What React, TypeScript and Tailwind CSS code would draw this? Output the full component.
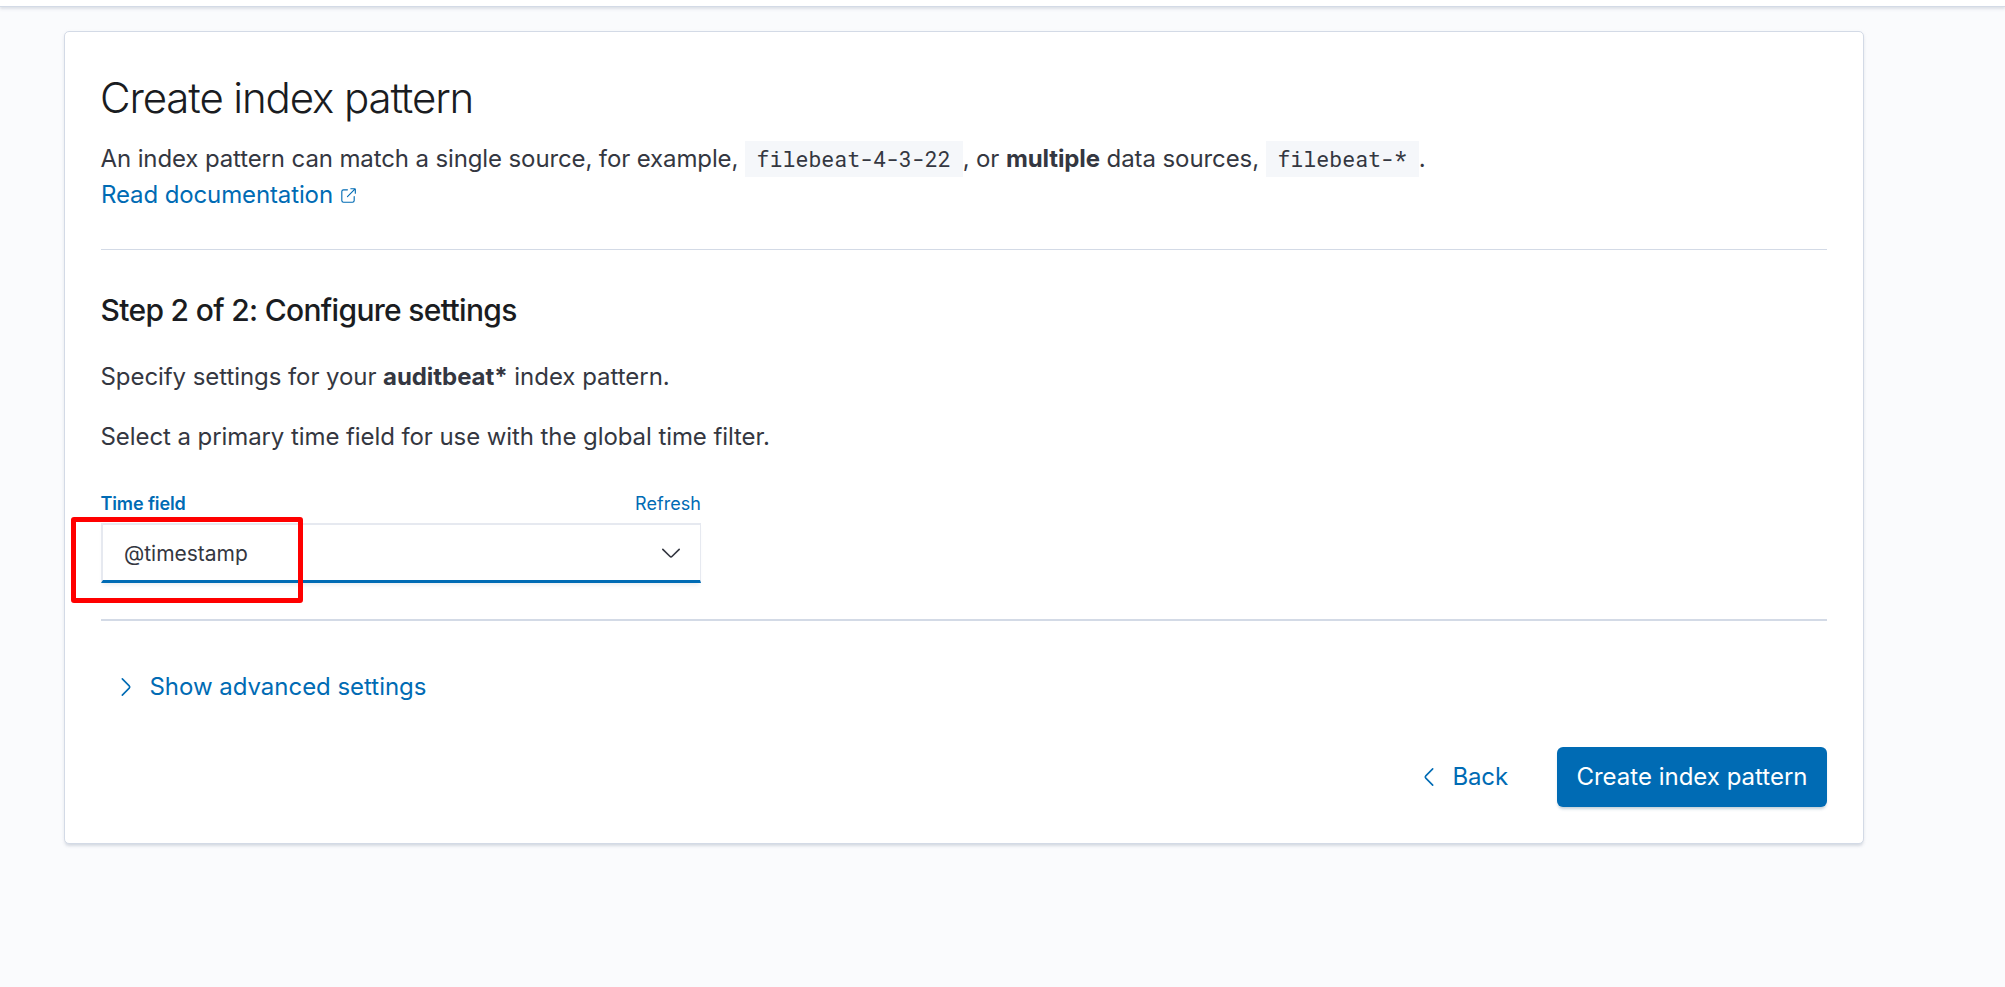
import type { ReactNode } from "react";

function Icon({ d, className }: { d: string; className: string }) {
  return (
    <svg viewBox="0 0 16 16" className={className} fill="currentColor" aria-hidden="true">
      <path d={d} />
    </svg>
  );
}

const ARROW_RIGHT =
  "M5.157 13.069l4.611-4.685a.546.546 0 000-.768L5.158 2.93a.552.552 0 010-.771.53.53 0 01.759 0l4.61 4.684a1.65 1.65 0 010 2.312l-4.61 4.684a.53.53 0 01-.76 0 .552.552 0 010-.771z";
const ARROW_LEFT =
  "M10.843 13.069L6.232 8.384a.546.546 0 010-.768l4.61-4.685a.552.552 0 000-.771.53.53 0 00-.759 0l-4.61 4.684a1.65 1.65 0 000 2.312l4.61 4.684a.53.53 0 00.76 0 .552.552 0 000-.771z";
const ARROW_DOWN =
  "M13.069 5.157L8.384 9.768a.546.546 0 01-.768 0L2.93 5.158a.552.552 0 00-.771 0 .53.53 0 000 .759l4.684 4.61a1.65 1.65 0 002.312 0l4.684-4.61a.53.53 0 000-.76.552.552 0 00-.771 0z";
const POPOUT =
  "M13 8.5a.5.5 0 111 0V12a2 2 0 01-2 2H4a2 2 0 01-2-2V4a2 2 0 012-2h3.5a.5.5 0 010 1H4a1 1 0 00-1 1v8a1 1 0 001 1h8a1 1 0 001-1V8.5zm-5.12.339a.5.5 0 11-.706-.707L13.305 2H10.5a.5.5 0 110-1H14a1 1 0 011 1v3.5a.5.5 0 11-1 0V2.72L7.88 8.838z";

function Code({ children }: { children: ReactNode }) {
  return (
    <code className="inline-block h-9 bg-[#f5f7fa] px-[11.7px] align-top font-['Roboto_Mono','Liberation_Mono',monospace] text-[21.6px] leading-9 tracking-normal">
      {children}
    </code>
  );
}

export default function App() {
  return (
    <div className="flex h-[987px] w-full flex-col bg-[#fafbfd] font-['Inter',sans-serif] text-[24px] leading-9 tracking-[-0.12px] text-[#343741]">
      <header className="h-[7px] shrink-0 border-b border-[#d3dae6] bg-white shadow-[0_2px_3px_rgba(152,162,179,0.3)]" />
      <main className="ml-16 mt-6 flex h-[813px] w-[1800px] flex-col rounded-[5px] border border-[#d3dae6] bg-white px-9 pt-9 shadow-[0_3px_3px_-1px_rgba(152,162,179,0.3),0_1px_5px_-2px_rgba(152,162,179,0.3)]">
        <h1 className="-ml-px text-[42px] font-light leading-[60px] tracking-[-1.12px] text-[#1a1c21]">
          Create index pattern
        </h1>
        <p className="-ml-[0.5px] mt-[13px] h-9 whitespace-nowrap">
          An index pattern can match a single source, for example, <Code>filebeat-4-3-22</Code>, or{" "}
          <strong className="font-bold">multiple</strong>
          <span className="tracking-[-0.08px]"> data sources, </span>
          <Code>filebeat-*</Code>.
        </p>
        <a className="flex h-9 items-center gap-1.5 text-[#006bb4]">
          Read documentation
          <Icon d={POPOUT} className="mt-0.5 size-[18px]" />
        </a>
        <hr className="mt-9 border-[#d3dae6]" />

        <h2 className="-ml-[0.5px] mt-[42px] text-[30px] font-medium leading-9 tracking-[-0.68px] text-[#1a1c21]">
          Step 2 of 2: Configure settings
        </h2>
        <p className="-ml-[0.5px] mt-[31px] tracking-[-0.07px]">
          Specify settings for your <strong className="font-bold">auditbeat*</strong>
          <span className="tracking-[-0.02px]"> index pattern.</span>
        </p>
        <p className="-ml-[0.5px] mt-6 tracking-[-0.08px]">
          Select a primary time field for use with the global time filter.
        </p>

        <div className="mt-[35px] flex h-[33px] w-[600px] justify-between text-[18px] leading-[27px] text-[#006bb4]">
          <label className="-ml-[0.5px] font-semibold">Time field</label>
          <a className="tracking-[0.05px]">Refresh</a>
        </div>
        <div className="relative flex h-[60px] w-[600px] items-center justify-between border-b-[3px] border-l-2 border-r border-t-2 border-b-[#006bb4] border-l-[#e6e9f0] border-r-[#e6e9f0] border-t-[#e6e9f0] bg-white pl-[21px] pr-[17px] text-[21px] shadow-[0_4px_4px_-2px_rgba(152,162,179,0.2)]">
          <span className="pt-0.5 tracking-[-0.02px]">@timestamp</span>
          <Icon d={ARROW_DOWN} className="size-6" />
          <div className="pointer-events-none absolute -left-8 -top-2 h-[86px] w-[232px] rounded-[3px] border-[5px] border-[#ff0000]" />
        </div>
        <hr className="mt-9 border-t-2 border-[#d3dae6]" />

        <button className="ml-[13px] mt-12 flex h-9 items-center gap-[11.5px] self-start tracking-[-0.03px] text-[#006bb4]">
          <Icon d={ARROW_RIGHT} className="size-6" />
          Show advanced settings
        </button>
        <div className="mt-[42px] flex items-center justify-end gap-[49px]">
          <button className="flex items-center gap-[11px] text-[#006bb4]">
            <Icon d={ARROW_LEFT} className="size-6" />
            Back
          </button>
          <button className="h-[60px] w-[270px] whitespace-nowrap rounded-[6px] bg-[#006bb4] tracking-[0px] text-white shadow-[0_3px_3px_-1px_rgba(54,97,126,0.3)]">
            Create index pattern
          </button>
        </div>
      </main>
    </div>
  );
}
